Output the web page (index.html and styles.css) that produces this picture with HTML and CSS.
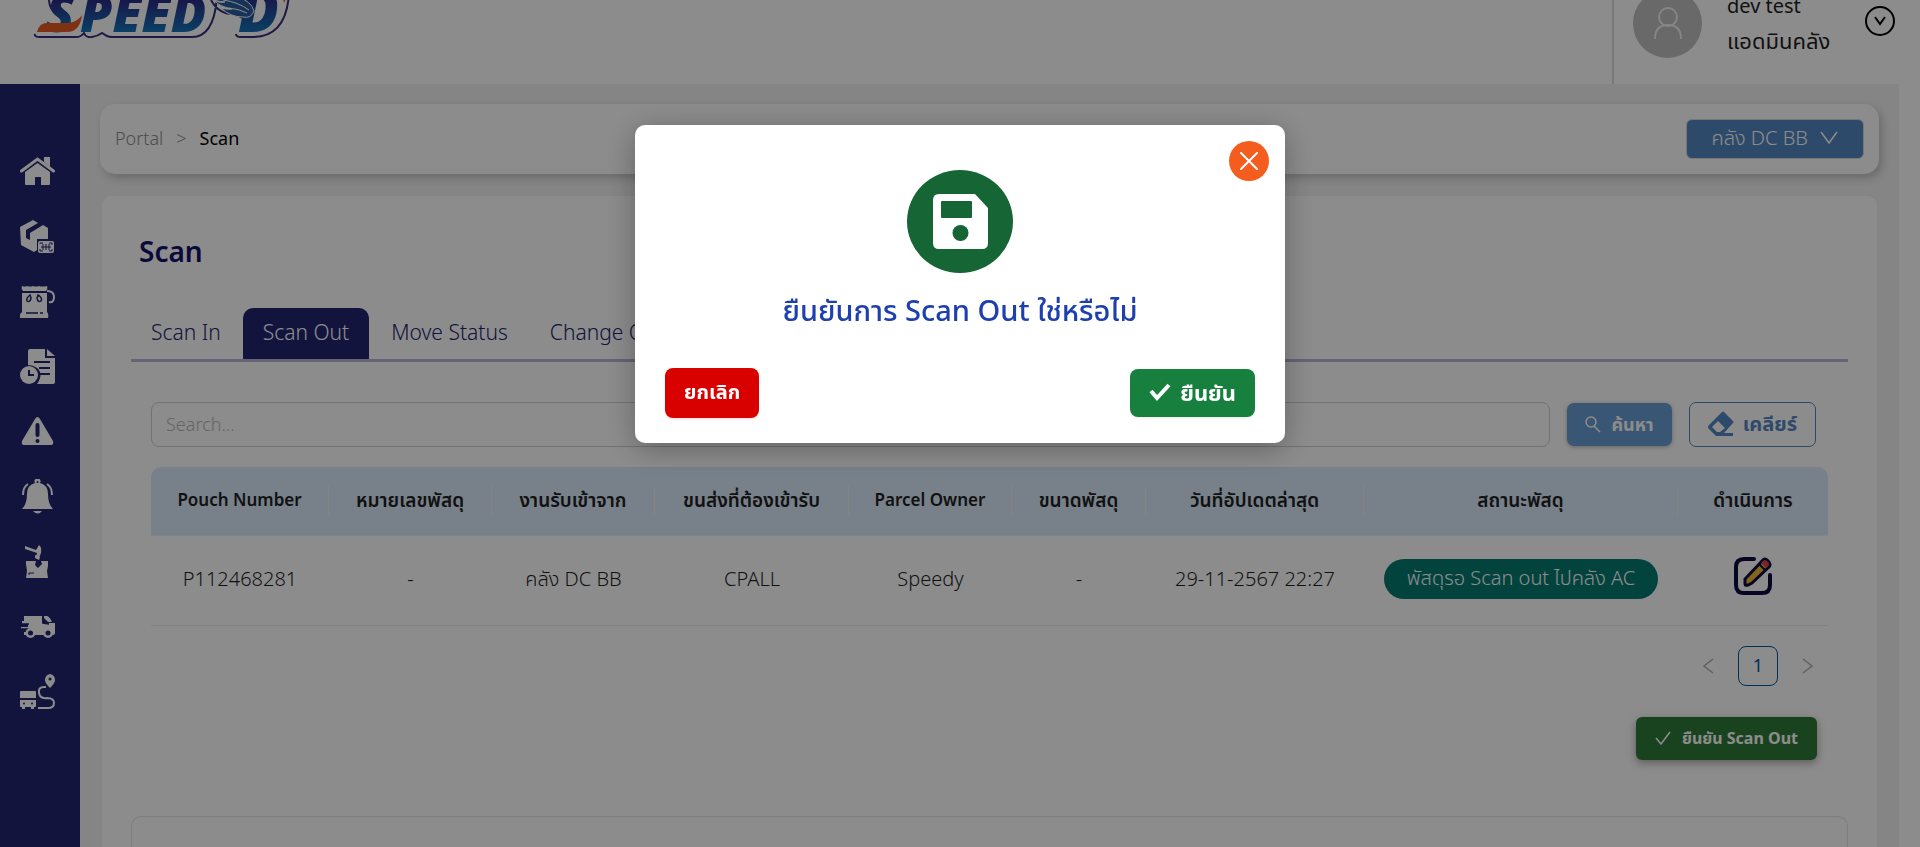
FILE: index.html
```html
<!DOCTYPE html>
<html lang="th">
<head>
<meta charset="utf-8">
<title>Scan Out</title>
<link rel="stylesheet" href="styles.css">
</head>
<body>
<header class="topbar">
  <a class="logo" href="#" aria-label="SPEED-D">
    <svg width="260" height="60" viewBox="0 0 260 60">
      <defs>
        <linearGradient id="blue" x1="0" y1="0" x2="0" y2="1"><stop offset="0.35" stop-color="#2a2d86"/><stop offset="0.8" stop-color="#1376bb"/></linearGradient>
      </defs>
      <path d="M18 21q0 10 8 16M4 56q-1 3 5 3h36q5 0 8-4 2 5 8 4 6-1 10-4l5 3q2 1 5 1h80q22 0 25-40M180 22q8 15 24 14l12 6M205 56q0 3 5 3h12q33 0 36-43" fill="none" stroke="#352c7c" stroke-width="2"/>
      <g class="logo-word">
        <text x="15" y="54" fill="url(#blue)">S</text>
        <text x="49" y="54" fill="url(#blue)">PEED</text>
        <text class="logo-last" x="207" y="54" fill="url(#blue)">D</text>
      </g>
      <path d="M6 54q2-9 10-9h20q11-1 15-8-2 17-15 17z" fill="#e85a26"/>
      <path d="M248 14h8q0 6-3 11-1-7-5-11z" fill="#e85a26"/>
      <path d="M176 19q17-3 31 0 13 4 16 14-3 8-11 6-13 0-22-9 7 2 11 1-14-3-17-8 5 2 10 1-12-1-18-5z" fill="#2b5fa0" stroke="#fff"/>
      <path d="M192 22q15 2 26 10M198 30q10 1 18 5" fill="none" stroke="#fff"/>
    </svg>
  </a>
  <div class="account">
    <span class="avatar">
      <svg width="30" height="34" viewBox="0 0 30 34" fill="none" stroke="#f2f2f2" stroke-width="2"><circle cx="15" cy="11" r="9"/><path d="M2 33q0-14 13-14t13 14"/></svg>
    </span>
    <div class="who"><span>dev test</span><span class="role">แอดมินคลัง</span></div>
    <button class="account-toggle" aria-label="Account menu">
      <svg width="12" height="10" viewBox="0 0 12 10" fill="none" stroke="#000" stroke-width="2"><path d="M1 1l5 7 5-7"/></svg>
    </button>
  </div>
</header>

<div class="shell">
  <nav class="sidebar" aria-label="Main">
    <a href="#" aria-label="Home"><svg viewBox="0 0 35 35"><path d="M5 18 17.500 9 30 18v12q0 1-1 1h-8v-8h-6v8H6q-1 0-1-1z"/><path d="M1.500 17 17.500 5 33.500 17" fill="none" stroke="#fff" stroke-width="3" stroke-linecap="round"/><path d="M24 3h6v10l-6-5z"/></svg></a>
    <a href="#" aria-label="Parcels"><svg viewBox="0 0 35 35"><path d="M0 8 13 1 18 4 6 11v8l4 2v-7l13-8 5 3v11H17v11L14 33 1 26z"/><rect x="18" y="22" width="16" height="12" rx="2"/><path d="M20 25v-1h3m6 0h3v2m0 4v2h-3m-6 0h-3v-2m3-5v6m3-6v6m3-6v6m-8-3h10" fill="none" stroke="#212570" stroke-width="1"/></svg></a>
    <a href="#" aria-label="Pouches"><svg viewBox="0 0 35 35"><path d="M2 2q3 1 5 0 3 1 6 0 3 1 6 0 3 1 8 0 1 3-1 5H3Q1 5 2 2zM2 9h25v19q2 2 1 6H0q-1-4 2-6z"/><path d="M10 11q-4 3-3 6 3 2 4-3zM18 11q5 3 3 6-3 2-4-3zM6 29h12m2 0h3" fill="none" stroke="#212570" stroke-width="1.500"/><path d="M27 7q7 0 7 6t-5 5" fill="none" stroke="#fff" stroke-width="2"/></svg></a>
    <a href="#" aria-label="History"><svg viewBox="0 0 35 35"><path d="M8 2q0-2 2-2h15v9h10v24q0 2-2 2H17q7-10 0-16-4-3-9-3z"/><path d="M27 0l8 7h-8z"/><path d="M14 13h16M19 19h11M20 25h10" fill="none" stroke="#212570" stroke-width="2"/><circle cx="9" cy="26" r="9"/><path d="M9 21v5h5" fill="none" stroke="#212570" stroke-width="2"/></svg></a>
    <a href="#" aria-label="Problems"><svg viewBox="0 0 35 35"><path d="M15 5q2.500-4 5 0l13 22q1 4-2 4H4q-3 0-2-4z"/><path d="M17.500 11v10" stroke="#212570" stroke-width="4" stroke-linecap="round"/><circle cx="17.500" cy="27" r="2" fill="#212570"/></svg></a>
    <a href="#" aria-label="Notifications"><svg viewBox="0 0 35 35"><path d="M15 4a3 3 0 1 1 5 0q8 2 8 11 0 10 5 15H2q5-5 5-15 0-9 8-11zM13 32h9q-4 5-9 0z"/><circle cx="17.500" cy="3" r="1" fill="#212570"/><path d="M3 16Q3 8 8 5M32 16q0-8-5-11" fill="none" stroke="#fff" stroke-width="2"/></svg></a>
    <a href="#" aria-label="Damaged"><svg viewBox="0 0 35 35"><path d="M6 17h10l-1 4 3 3 4-4-1-3h7v5l-1 5 1 7H6l1-7-1-7z"/><path d="M5 2l11 4 3-5q3 2 2 8l-2 5-3-1 1-4L5 5zM15 11l5 2-1 3-4-2z"/><path d="M9 31v-2h5" fill="none" stroke="#212570"/></svg></a>
    <a href="#" aria-label="Shipping"><svg viewBox="0 0 35 35"><path d="M4 7h18v7h13v10q0 2-3 2H4v-3h7v-3H1v-2h7v-3H2v-3h2z"/><path d="M24 7h3q3 1 5 6h-4l-4-4z"/><path d="M1 15h8M1 20h10M23 8v6l6 1" fill="none" stroke="#212570" stroke-width="1.500"/><circle cx="10.500" cy="24" r="5"/><circle cx="28" cy="24" r="5"/><circle cx="10.500" cy="24" r="2.500" fill="#212570"/><circle cx="28" cy="24" r="2.500" fill="#212570"/></svg></a>
    <a href="#" aria-label="Routes"><svg viewBox="0 0 35 35"><path d="M30 0q5 1 5 6 0 3-5 8-5-5-5-8 0-5 5-6zM1 17h14q1 0 1 1v6H0v-6q0-1 1-1zM0 26h16v7h-2v2h-3v-2H5v2H2v-2H0z"/><circle cx="30" cy="5" r="1.500" fill="#212570"/><circle cx="4" cy="29.500" r="1" fill="#212570"/><circle cx="12" cy="29.500" r="1" fill="#212570"/><path d="M26 13h-2q-6 0-5 6t8 5q7 0 7 5t-6 5H18" fill="none" stroke="#fff" stroke-width="2"/></svg></a>
  </nav>

  <main class="content">
    <section class="crumbs">
      <nav class="trail" aria-label="Breadcrumb"><a href="#">Portal</a><span class="sep">&gt;</span><span class="here">Scan</span></nav>
      <button class="branch">คลัง DC BB
        <svg width="18" height="14" viewBox="0 0 18 14" fill="none" stroke="#fff" stroke-width="1.500"><path d="M1 1l8 11 8-11"/></svg>
      </button>
    </section>

    <section class="panel">
      <h1>Scan</h1>
      <div class="tabs" role="tablist">
        <button role="tab">Scan In</button>
        <button role="tab" class="active" aria-selected="true">Scan Out</button>
        <button role="tab">Move Status</button>
        <button role="tab">Change Owner</button>
      </div>
      <div class="work">
        <form class="search">
          <input type="text" placeholder="Search..." aria-label="Search">
          <button type="button" class="find">
            <svg width="16" height="18" viewBox="0 0 16 18" fill="none" stroke="#fff" stroke-width="1.500"><circle cx="6" cy="7" r="5"/><path d="M9 11l6 6"/></svg>
            ค้นหา
          </button>
          <button type="button" class="clear">
            <svg width="26" height="26" viewBox="0 0 26 26"><path d="M1 14 14 1q1-1 2 0l9 9q1 1 0 2L16 22h9v3H8l-7-7q-2-2 0-4zm9-4-6 6 5 5h3l5-4z" fill="#5588c3" fill-rule="evenodd"/></svg>
            เคลียร์
          </button>
        </form>
        <table class="parcels">
          <colgroup><col class="c-pouch"><col class="c-parcel"><col class="c-from"><col class="c-carrier"><col class="c-owner"><col class="c-size"><col class="c-date"><col class="c-status"><col class="c-action"></colgroup>
          <thead><tr><th lang="en"><span>Pouch Number</span></th><th><span>หมายเลขพัสดุ</span></th><th><span>งานรับเข้าจาก</span></th><th><span>ขนส่งที่ต้องเข้ารับ</span></th><th lang="en"><span>Parcel Owner</span></th><th><span>ขนาดพัสดุ</span></th><th><span>วันที่อัปเดตล่าสุด</span></th><th><span>สถานะพัสดุ</span></th><th><span>ดำเนินการ</span></th></tr></thead>
          <tbody><tr><td>P112468281</td><td>-</td><td>คลัง DC BB</td><td>CPALL</td><td>Speedy</td><td>-</td><td>29-11-2567 22:27</td><td><span class="badge">พัสดุรอ Scan out ไปคลัง AC</span></td>
            <td><button class="edit" aria-label="Edit"><svg width="38" height="38" viewBox="0 0 38 38"><path d="M20 2H10Q2 2 2 10v18q0 8 8 8h18q8 0 8-8V18" fill="none" stroke="#0b0c40" stroke-width="4" stroke-linecap="round"/><path d="M11 27v-5L28 4q2-3 5-1l2 2q2 3 0 5L18 26l-4 2q-3 1-3-1z" fill="#f0b93a" stroke="#0b0c40" stroke-width="3"/><path d="M27 6l2-2q2-2 4 0l1 1q2 2 0 4l-2 2z" fill="#e0414d"/><path d="M25 7l6 6" stroke="#0b0c40" stroke-width="2"/></svg></button></td></tr></tbody>
        </table>
        <nav class="pager" aria-label="Pages">
          <button aria-label="Previous page"><svg width="12" height="18" viewBox="0 0 12 18" fill="none" stroke="#b0b0b0" stroke-width="1.500"><path d="M11 2 2 9l9 7"/></svg></button>
          <button class="page">1</button>
          <button aria-label="Next page"><svg width="12" height="18" viewBox="0 0 12 18" fill="none" stroke="#b0b0b0" stroke-width="1.500"><path d="M1 2l9 7-9 7"/></svg></button>
        </nav>
        <div class="submit">
          <button><svg width="16" height="14" viewBox="0 0 16 14" fill="none" stroke="#fff" stroke-width="1.500"><path d="M1 7l5 6L15 1"/></svg>ยืนยัน Scan Out</button>
        </div>
      </div>
      <div class="next-card"></div>
    </section>
  </main>
</div>

<div class="overlay">
  <div class="dialog" role="dialog" aria-modal="true" aria-labelledby="ask">
    <button class="close" aria-label="Close"><svg width="18" height="18" viewBox="0 0 18 18" stroke="#fff" stroke-width="2" stroke-linecap="round"><path d="M1 1l16 16M17 1 1 17"/></svg></button>
    <span class="mark"><svg width="55" height="55" viewBox="0 0 55 55"><path d="M6 0h36l13 14v35q0 6-6 6H6q-6 0-6-6V6q0-6 6-6z" fill="#fff"/><rect x="8" y="7" width="31" height="17" rx="1" fill="#166534"/><circle cx="27.500" cy="39" r="8" fill="#166534"/></svg></span>
    <h2 id="ask">ยืนยันการ Scan Out ใช่หรือไม่</h2>
    <div class="choices">
      <button class="cancel">ยกเลิก</button>
      <button class="confirm"><svg width="22" height="18" viewBox="0 0 22 18" fill="none" stroke="#fff" stroke-width="4"><path d="M2 8l6 7L20 2"/></svg>ยืนยัน</button>
    </div>
  </div>
</div>
</body>
</html>
```
FILE: styles.css
```css
* { box-sizing: border-box; }

body {
  margin: 0;
  height: 100vh;
  overflow: hidden;
  display: flex;
  flex-direction: column;
  background: #fff;
  color: #1f1f1f;
  font: 300 18px/28px "Noto Sans", "Noto Sans Thai", sans-serif;
}

button, input { font: inherit; color: inherit; }
button { display: inline-flex; align-items: center; justify-content: center; border: 0; padding: 0; background: none; white-space: nowrap; }
a { color: inherit; text-decoration: none; }
svg { display: block; flex: none; }
h1, h2 { margin: 0; }

.topbar { flex: none; height: 84px; display: flex; justify-content: space-between; align-items: flex-end; overflow: hidden; }
.logo { padding: 0 0 46px 31px; }
.logo-word { font: italic 900 52px "Noto Sans", sans-serif; }
.logo-last { font-size: 60px; }
.account { display: flex; align-items: center; border-left: 2px solid #dcdcdc; height: 120px; padding: 0 25px 2px 19px; }
.avatar { width: 69px; height: 69px; border-radius: 50%; background: #bfbfbf; display: grid; place-items: center; }
.who { display: flex; flex-direction: column; width: 138px; margin: 0 0 0 25px; font-size: 20px; line-height: 34px; font-weight: 400; }
.role { font-size: 22px; }
.account-toggle { width: 30px; height: 30px; border: 2px solid #000; border-radius: 50%; margin-bottom: 4px; }

.shell { flex: 1; min-height: 0; display: flex; padding-right: 21px; }
.sidebar { flex: none; width: 80px; background: #212570; padding: 70px 20px 0; display: flex; flex-direction: column; gap: 30px; }
.sidebar svg { width: 35px; height: 35px; fill: #fff; }

.content { flex: 1; min-width: 0; background: #f2f2f2; padding: 20px 20px 0; display: flex; flex-direction: column; gap: 21px; }
.crumbs { background: #fff; border-radius: 15px; padding: 15px; height: 70px; display: flex; align-items: center; justify-content: space-between; box-shadow: 3px 4px 8px rgba(0, 0, 0, .2); }
.trail { display: flex; gap: 13px; color: #8c8c8c; padding-bottom: 2px; }
.here { color: #000; font-weight: 400; }
.branch { background: #5588c3; color: #fff; border: 1px solid #d9d9d9; border-radius: 6px; height: 40px; padding: 0 25px 2px; gap: 12px; font-size: 20px; }

.panel { flex: 1; min-height: 0; display: flex; flex-direction: column; background: #fff; border: 1px solid #f0f0f0; border-bottom: 0; border-radius: 10px 10px 0 0; margin: 0 1px; padding: 35px 29px 0; }
.panel h1 { color: #15126b; font-size: 28px; line-height: 40px; font-weight: 600; padding-left: 8px; }
.tabs { display: flex; gap: 2px; margin-top: 37px; border-bottom: 3px solid #b9b4d5; color: #212570; font-size: 21px; }
.tabs button { height: 51px; padding: 0 20px 4px; border-radius: 10px 10px 0 0; }
.tabs .active { background: #212570; color: #fff; }

.work { padding: 40px 20px 0; }
.search { display: flex; align-items: center; gap: 17px; padding-right: 12px; margin-bottom: 20px; }
.search input { flex: 1; min-width: 0; height: 45px; border: 1px solid #d0d0d0; border-radius: 8px; padding: 0 14px 2px; background: #fff; }
.search input::placeholder { color: #b8b8b8; opacity: 1; }
.find, .clear { height: 43px; border-radius: 7px; gap: 10px; padding: 0 18px 2px; font-weight: 700; box-shadow: 0 1px 4px rgba(0, 0, 0, .3); }
.find { background: #699ed5; color: #fff; }
.clear { height: 45px; border: 1px solid #5588c3; color: #5588c3; background: #fff; font-size: 20px; gap: 9px; box-shadow: none; }

.parcels { width: 100%; table-layout: fixed; border-collapse: separate; border-spacing: 0; text-align: center; }
.c-pouch { width: 178px; } .c-parcel, .c-from, .c-owner { width: 163px; } .c-carrier { width: 194px; }
.c-size { width: 134px; } .c-date { width: 218px; } .c-status { width: 314px; } .c-action { width: 150px; }
.parcels th { background: #dae9fa; padding: 19px 0 20px; font-size: 19px; font-weight: 600; border-bottom: 1px solid #f0f0f0; white-space: nowrap; }
.parcels th:lang(en) { font-size: 17px; }
.parcels th span { display: block; line-height: 28px; height: 29px; border-right: 1px solid #f0f0f0; }
.parcels th:last-child span { border-right: 0; }
.parcels th:first-child { border-top-left-radius: 10px; }
.parcels th:last-child { border-top-right-radius: 10px; }
.parcels td { height: 90px; padding: 0 0 3px; border-bottom: 1px solid #ededed; white-space: nowrap; font-size: 20px; }
.badge { display: inline-block; background: #057a72; color: #fff; line-height: 38px; border-radius: 20px; padding: 0 23px 2px; }
.edit { vertical-align: middle; padding-bottom: 6px; }

.pager { display: flex; justify-content: flex-end; gap: 10px; padding-top: 20px; }
.pager button { width: 40px; height: 40px; border-radius: 8px; }
.pager .page { border: 1px solid #005a9e; color: #005a9e; font-weight: 400; padding-bottom: 2px; }
.submit { display: flex; justify-content: flex-end; padding: 31px 11px 0 0; }
.submit button { background: #2f7a37; color: #fff; height: 43px; border-radius: 6px; padding: 0 19px 2px; gap: 11px; font-size: 16px; font-weight: 700; box-shadow: 0 3px 8px rgba(0, 0, 0, .35); }
.next-card { flex: 1; margin-top: 56px; border: 1px solid #e6e6e6; border-bottom: 0; border-radius: 10px 10px 0 0; }

.overlay { position: fixed; inset: 0; background: rgba(0, 0, 0, .45); display: flex; justify-content: center; align-items: flex-start; padding-top: 125px; }
.dialog { position: relative; width: 650px; background: #fff; border-radius: 10px; padding: 45px 30px 25px; display: flex; flex-direction: column; align-items: center; box-shadow: 0 6px 30px rgba(0, 0, 0, .3); }
.close { position: absolute; top: 16px; right: 16px; width: 40px; height: 40px; border-radius: 50%; background: #f55d1f; }
.mark { width: 106px; height: 103px; border-radius: 50%; background: #166534; display: grid; place-items: center; }
.dialog h2 { color: #1e40af; font-size: 29px; line-height: 40px; font-weight: 500; margin-top: 17px; }
.choices { align-self: stretch; display: flex; justify-content: space-between; align-items: center; margin-top: 38px; color: #fff; font-weight: 700; }
.cancel { background: #d90000; height: 50px; border-radius: 8px; padding: 0 19px 2px; font-size: 20px; box-shadow: 0 2px 2px rgba(255, 38, 5, .1); }
.confirm { background: #17803e; height: 48px; border-radius: 8px; padding: 0 19px 2px; gap: 9px; font-size: 22px; box-shadow: 0 2px 2px rgba(0, 0, 0, .05); }
```
